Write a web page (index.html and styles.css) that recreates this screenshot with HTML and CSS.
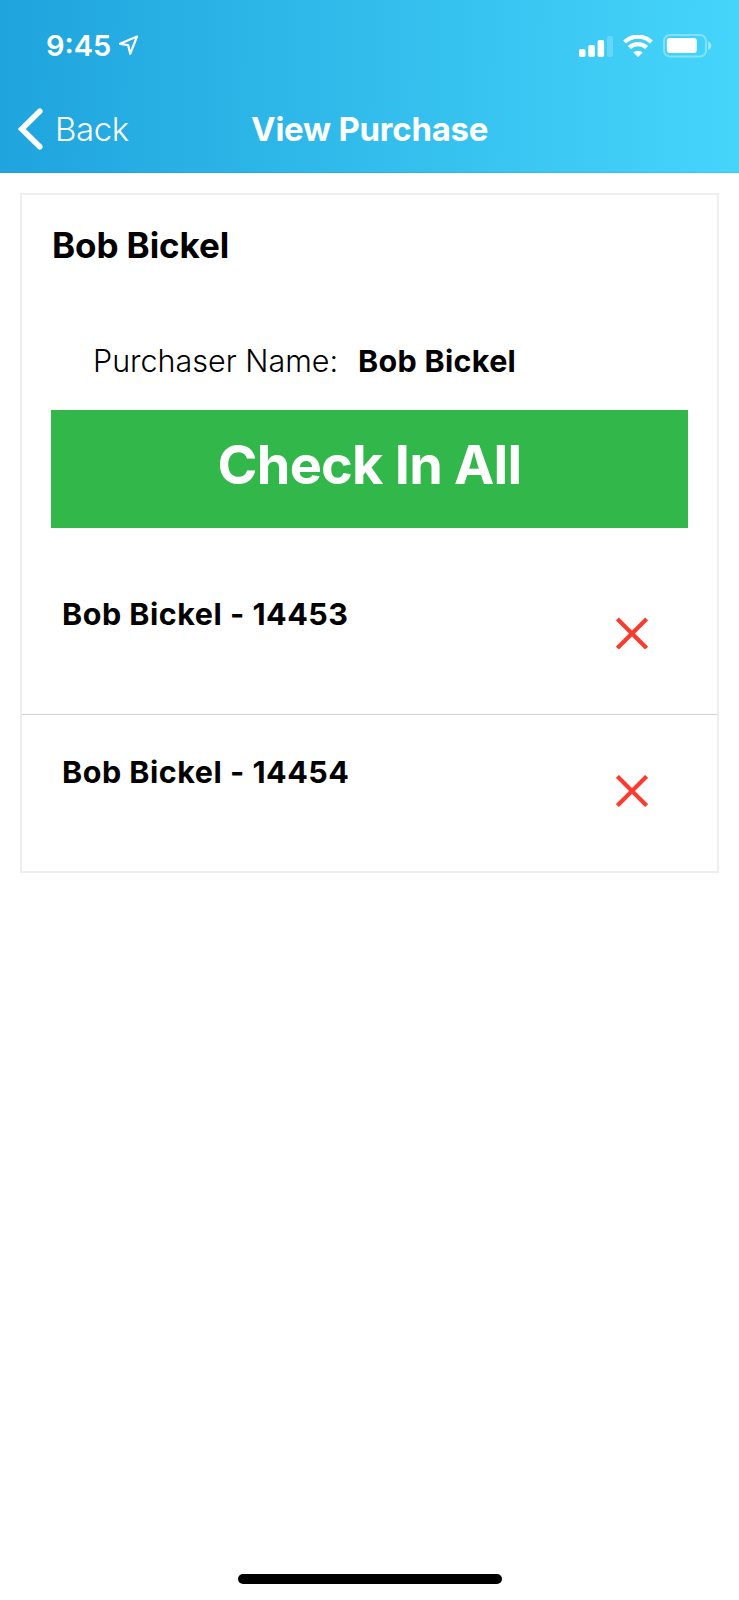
FILE: index.html
```html
<!DOCTYPE html>
<html lang="en">
<head>
<meta charset="utf-8">
<title>View Purchase</title>
<link rel="stylesheet" href="styles.css">
</head>
<body>
<div class="screen">
  <header class="header">
    <div class="status">
      <span class="time">9:45</span>
      <svg class="location" width="21" height="21" viewBox="0 0 21 21"><path d="M19 1.5 2 8.8 10.2 10.2 12.2 18.8Z" fill="none" stroke="#fff" stroke-width="2.2" stroke-linejoin="round"/></svg>
      <svg class="signal" width="34" height="22" viewBox="0 0 34 22" fill="#fff"><rect x="0" y="14" width="6.5" height="8" rx="1.7"/><rect x="9.3" y="10" width="6.5" height="12" rx="1.7"/><rect x="18.6" y="5" width="6.5" height="17" rx="1.7"/><rect x="28" y="1" width="6" height="21" rx="1.7" opacity=".2"/></svg>
      <svg class="wifi" width="30" height="22" viewBox="0 0 30 22" fill="none" stroke="#fff" stroke-width="4.2"><path d="M1.6 7a19.2 19.2 0 0 1 26.8 0"/><path d="M6.4 12.6a12.2 12.2 0 0 1 17.2 0"/><path d="M10.3 17.6a6.8 6.8 0 0 1 9.4 0L15 22Z" fill="#fff" stroke="none"/></svg>
      <svg class="battery" width="49" height="24" viewBox="0 0 49 24"><rect x="1" y="1" width="42" height="21.5" rx="6" fill="none" stroke="#fff" stroke-opacity=".35" stroke-width="2"/><rect x="3.8" y="4" width="30" height="15" rx="3" fill="#fff"/><path d="M45.2 7.6q3 1.2 3 4.2t-3 4.2Z" fill="#fff" opacity=".5"/></svg>
    </div>
    <nav class="nav">
      <a class="back"><svg width="26" height="42" viewBox="0 0 26 42"><path d="M21.8 3.3 3.8 21 21.8 38.7" fill="none" stroke="#fff" stroke-width="5.6" stroke-linecap="round" stroke-linejoin="miter"/></svg><span class="back-label">Back</span></a>
      <h1 class="title">View Purchase</h1>
    </nav>
  </header>
  <main class="card">
    <h2 class="name">Bob Bickel</h2>
    <div class="purchaser"><span class="label">Purchaser Name:</span><strong class="value">Bob Bickel</strong></div>
    <button class="check-in"><span class="check-text">Check In All</span></button>
    <ul class="tickets">
      <li class="ticket"><span class="ticket-name">Bob Bickel - 14453</span><svg class="cross" width="32" height="32" viewBox="0 0 32 32"><path d="M1.4 1.9 30.6 31.1M30.6 1.9 1.4 31.1" stroke="#fb3b2f" stroke-width="4.2"/></svg></li>
      <li class="ticket"><span class="ticket-name">Bob Bickel - 14454</span><svg class="cross" width="32" height="32" viewBox="0 0 32 32"><path d="M1.4 1.4 30.6 30.6M30.6 1.4 1.4 30.6" stroke="#fb3b2f" stroke-width="4.2"/></svg></li>
    </ul>
  </main>
  <div class="home-bar"></div>
</div>
</body>
</html>
```
FILE: styles.css
```css
* { box-sizing: border-box; }
body { margin: 0; background: #fff; color: #000; font-family: Inter, "Liberation Sans", sans-serif; }
.screen { width: 739px; height: 1600px; display: flex; flex-direction: column; background: #fff; }
.header { height: 173px; color: #fff; background: linear-gradient(91deg, #1fa4dd 0%, #45d5fb 100%); border-bottom: 1px solid rgba(40, 130, 170, .2); }
.status { height: 91px; padding-left: 46px; display: flex; align-items: center; }
.time { width: 72px; font-size: 29px; font-weight: 600; line-height: 36px; white-space: nowrap; }
.signal { margin-left: 440px; }
.wifi { margin-left: 10px; }
.battery { margin-left: 10px; }
.nav { height: 76px; padding-left: 18px; display: grid; grid-template-columns: 233px 1fr; align-items: center; }
.back { display: flex; align-items: center; }
.back-label { margin-left: 11px; font-size: 33px; font-weight: 350; line-height: 40px; letter-spacing: -0.4px; }
.title { margin: 0; font-size: 33px; font-weight: 650; line-height: 40px; letter-spacing: -0.25px; white-space: nowrap; }
.card { margin: 20px 20px 0; height: 680px; padding-top: 30px; border: 2px solid #eee; }
.name { margin: 0 0 0 30px; font-size: 35px; font-weight: 650; line-height: 41px; letter-spacing: -0.1px; }
.purchaser { margin: 77px 0 0 71px; display: flex; font-size: 30.5px; line-height: 35px; white-space: nowrap; }
.label { width: 265px; font-weight: 350; }
.value { font-weight: 650; letter-spacing: 0.3px; }
.check-in { display: block; width: 637px; height: 118px; margin: 32px 0 0 29px; padding: 24px 0 33px; border: 0; background: #32b84a; color: #fff; font: 700 54px/61px Inter, "Liberation Sans", sans-serif; letter-spacing: -0.75px; text-align: center; }
.tickets { margin: 29px 0 0; padding: 0; list-style: none; }
.ticket { height: 157px; padding: 39px 69px 0 40px; display: flex; justify-content: space-between; align-items: flex-start; }
.ticket + .ticket { height: 158px; border-top: 1px solid #d2d2d4; }
.ticket-name { font-size: 30.5px; font-weight: 650; line-height: 36px; letter-spacing: 0.5px; }
.cross { margin-top: 21px; }
.home-bar { width: 264px; height: 10px; margin: auto 0 16px 238px; border-radius: 5px; background: #000; }
```
